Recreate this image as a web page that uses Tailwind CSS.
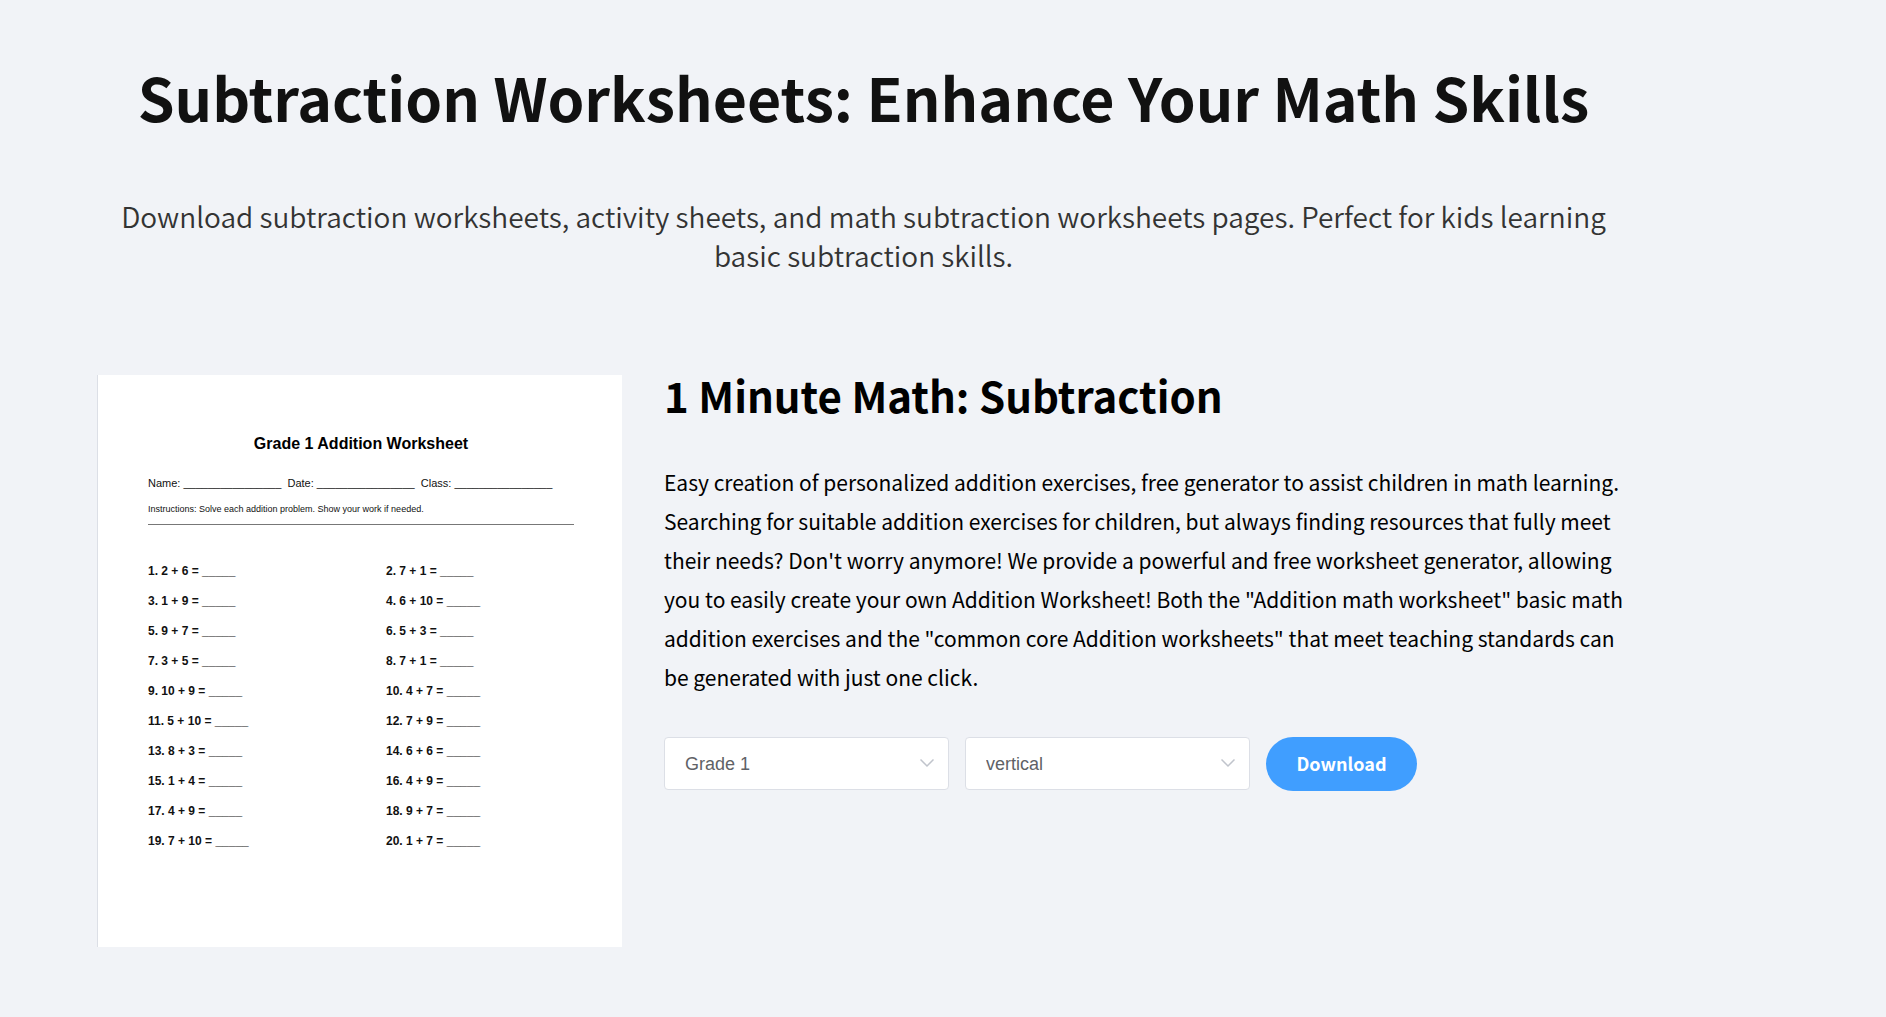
<!DOCTYPE html>
<html lang="en">
<head>
<meta charset="utf-8">
<title>Subtraction Worksheets</title>
<script src="https://cdn.jsdelivr.net/npm/@tailwindcss/browser@4"></script>
</head>
<body class="min-h-screen bg-[#f1f3f7] font-['Noto_Sans_CJK_SC',sans-serif] text-black">
<main class="pt-[53px] pr-[256px] pb-16 pl-[97px]">
  <header class="text-center">
    <h1 class="text-[59px] leading-[88px] font-bold text-[#111111]">Subtraction Worksheets: Enhance Your Math Skills</h1>
    <p class="mt-14 text-[28px] leading-[39px] font-[350] text-[#333333]">Download subtraction worksheets, activity sheets, and math subtraction worksheets pages. Perfect for kids learning basic subtraction skills.</p>
  </header>
  <section class="mt-[100px] flex items-start gap-[42px]">
    <article class="h-[572px] w-[525px] shrink-0 border-l border-[#dcdfe6] bg-white pt-[57px] pr-12 pl-[50px] font-['Liberation_Sans',sans-serif] text-[#111111]">
      <h3 class="text-center text-base leading-6 font-bold text-black">Grade 1 Addition Worksheet</h3>
      <p class="mt-[17px] text-[11px] leading-5 whitespace-pre">Name: ________________  Date: ________________  Class: ________________</p>
      <p class="mt-2 border-b border-[#777777] pb-[7px] text-[9px] leading-4">Instructions: Solve each addition problem. Show your work if needed.</p>
      <div class="mt-[31px] grid grid-cols-[238px_1fr] text-xs leading-[30px] font-bold">
        <p>1. 2 + 6 = _____</p><p>2. 7 + 1 = _____</p>
        <p>3. 1 + 9 = _____</p><p>4. 6 + 10 = _____</p>
        <p>5. 9 + 7 = _____</p><p>6. 5 + 3 = _____</p>
        <p>7. 3 + 5 = _____</p><p>8. 7 + 1 = _____</p>
        <p>9. 10 + 9 = _____</p><p>10. 4 + 7 = _____</p>
        <p>11. 5 + 10 = _____</p><p>12. 7 + 9 = _____</p>
        <p>13. 8 + 3 = _____</p><p>14. 6 + 6 = _____</p>
        <p>15. 1 + 4 = _____</p><p>16. 4 + 9 = _____</p>
        <p>17. 4 + 9 = _____</p><p>18. 9 + 7 = _____</p>
        <p>19. 7 + 10 = _____</p><p>20. 1 + 7 = _____</p>
      </div>
    </article>
    <div class="min-w-0 flex-1">
      <h2 class="text-[42px] leading-10 font-bold">1 Minute Math: Subtraction</h2>
      <p class="mt-12 text-[21px] leading-[39px]">Easy creation of personalized addition exercises, free generator to assist children in math learning. Searching for suitable addition exercises for children, but always finding resources that fully meet their needs? Don't worry anymore! We provide a powerful and free worksheet generator, allowing you to easily create your own Addition Worksheet! Both the "Addition math worksheet" basic math addition exercises and the "common core Addition worksheets" that meet teaching standards can be generated with just one click.</p>
      <form class="mt-10 flex items-start gap-4">
        <div class="relative">
          <select aria-label="Grade" class="h-[53px] w-[285px] appearance-none rounded border border-[#dcdfe6] bg-white px-5 font-['Liberation_Sans',sans-serif] text-lg text-[#606266]"><option>Grade 1</option></select>
          <svg class="pointer-events-none absolute top-5 right-[15px]" width="14" height="14" viewBox="0 0 14 14" fill="none" stroke="#c0c4cc" stroke-width="1.5"><path d="M.5 2.500 7 9l6.500-6.500"/></svg>
        </div>
        <div class="relative">
          <select aria-label="Layout" class="h-[53px] w-[285px] appearance-none rounded border border-[#dcdfe6] bg-white px-5 font-['Liberation_Sans',sans-serif] text-lg text-[#606266]"><option>vertical</option></select>
          <svg class="pointer-events-none absolute top-5 right-[15px]" width="14" height="14" viewBox="0 0 14 14" fill="none" stroke="#c0c4cc" stroke-width="1.5"><path d="M.5 2.500 7 9l6.500-6.500"/></svg>
        </div>
        <button type="button" class="h-[54px] w-[151px] rounded-full bg-[#409eff] pb-0.5 text-lg font-bold text-white">Download</button>
      </form>
    </div>
  </section>
</main>
</body>
</html>
